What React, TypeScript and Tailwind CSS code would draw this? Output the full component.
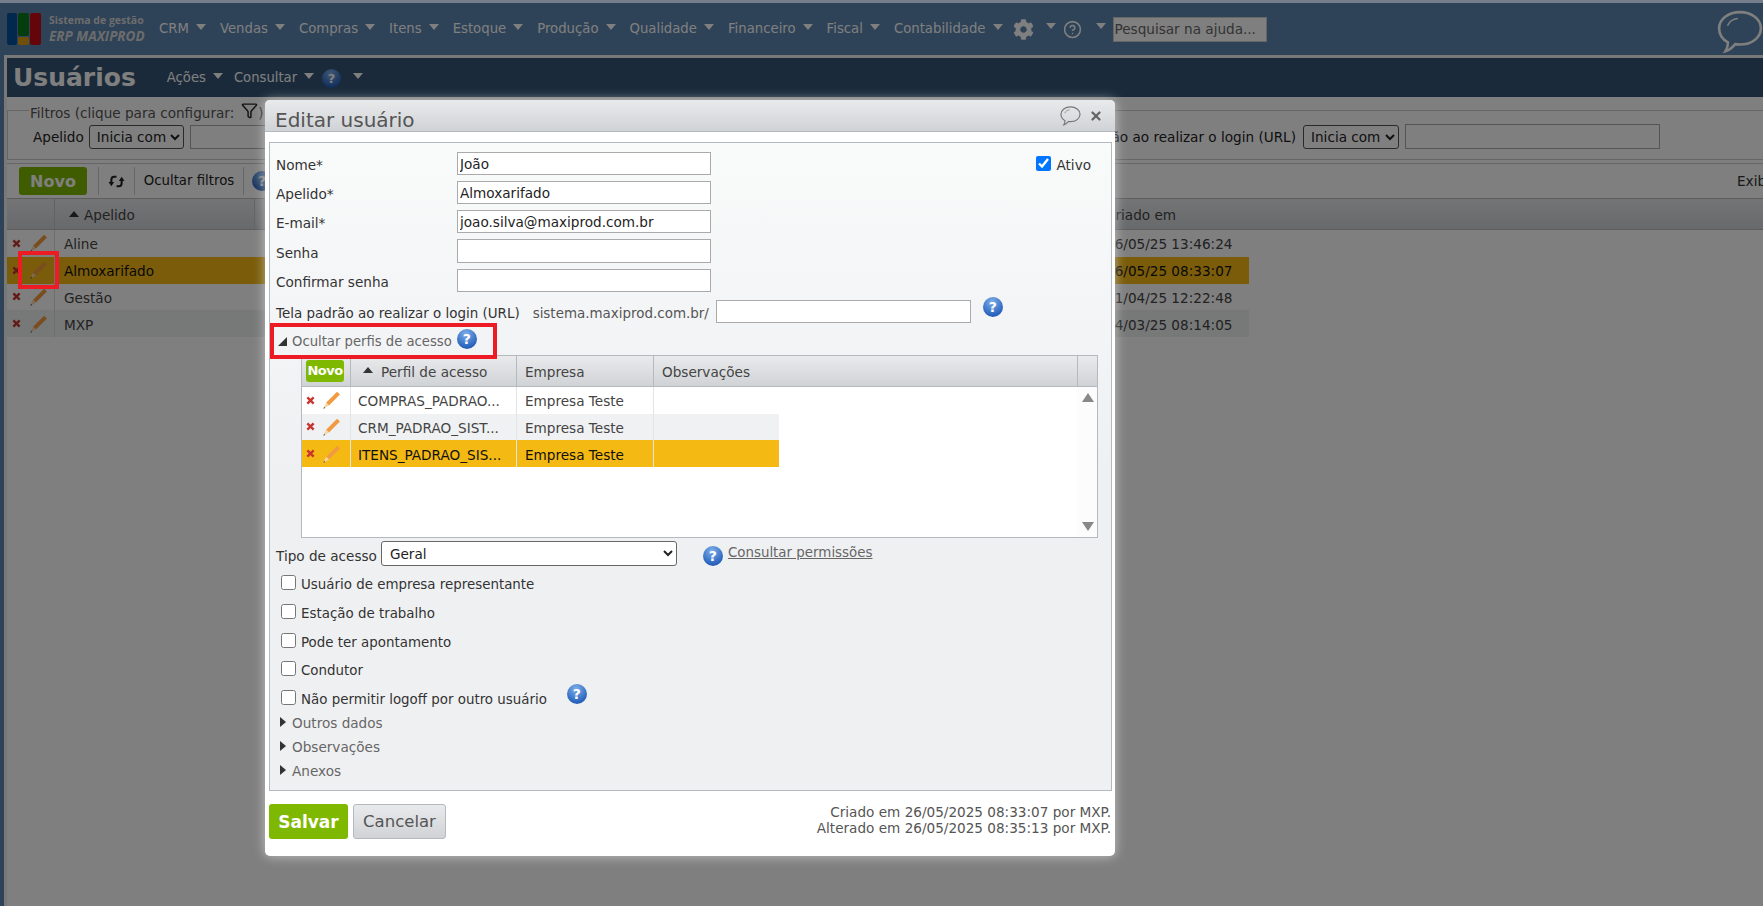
import { CircleHelp, Funnel, X } from 'lucide-react';
import { FaCog } from 'react-icons/fa';

const navItems = ['CRM', 'Vendas', 'Compras', 'Itens', 'Estoque', 'Produção', 'Qualidade', 'Financeiro', 'Fiscal', 'Contabilidade'];

const users = [
  { name: 'Aline', date: '26/05/25 13:46:24', bg: 'bg-white' },
  { name: 'Almoxarifado', date: '26/05/25 08:33:07', bg: 'bg-[#f5b914]' },
  { name: 'Gestão', date: '11/04/25 12:22:48', bg: 'bg-white' },
  { name: 'MXP', date: '24/03/25 08:14:05', bg: 'bg-[#eff1f1]' },
];

const profiles = [
  { name: 'COMPRAS_PADRAO...', bg: 'bg-white', text: 'text-[#444]' },
  { name: 'CRM_PADRAO_SIST...', bg: 'bg-[#f0f1f3]', text: 'text-[#444]' },
  { name: 'ITENS_PADRAO_SIS...', bg: 'bg-[#f5b914]', text: 'text-[#111]' },
];

const formFields = [
  { label: 'Nome*', value: 'João', h: 'h-[23px]' },
  { label: 'Apelido*', value: 'Almoxarifado', h: 'h-[23px]' },
  { label: 'E-mail*', value: 'joao.silva@maxiprod.com.br', h: 'h-[23px]' },
  { label: 'Senha', value: '', h: 'h-[24px]' },
  { label: 'Confirmar senha', value: '', h: 'h-[23px]' },
];

const flags = ['Usuário de empresa representante', 'Estação de trabalho', 'Pode ter apontamento', 'Condutor'];

function Caret({ className = 'fill-white' }: { className?: string }) {
  return (
    <svg viewBox="0 0 10 6" className={`w-[10px] h-[6px] ${className}`}>
      <path d="M0 0h10L5 6z" />
    </svg>
  );
}

function Help({ size = 'w-[20px] h-[20px] text-[14px]' }: { size?: string }) {
  return (
    <span className={`inline-flex items-center justify-center rounded-full shrink-0 font-bold text-white leading-none bg-[radial-gradient(circle_at_45%_25%,#7fb0ea,#2a64bd_70%,#1d4f9f)] ${size}`}>
      ?
    </span>
  );
}

function Pencil() {
  return (
    <svg viewBox="0 0 20 20" className="w-[22px] h-[22px] shrink-0">
      <path d="M5.500 12.500 15.500 2.500l2.600 2.600-10 10z" fill="#f29a3f" />
      <path d="M5.500 12.500 3 18l5.100-2.900z" fill="#f6d6a8" />
      <path d="M3.800 16.200 3 18l1.800-.8z" fill="#555" />
    </svg>
  );
}

function RemoveX() {
  return (
    <svg viewBox="0 0 10 10" className="w-[9px] h-[9px] shrink-0">
      <path d="M1.500 1.500l7 7M8.500 1.500l-7 7" stroke="#c6352f" strokeWidth="2.600" />
    </svg>
  );
}

function Bubble({ className }: { className: string }) {
  return (
    <svg viewBox="0 0 44 42" fill="none" className={className}>
      <path d="M22 2c11 0 20 6.500 20 15.500S33 33 22 33c-1.500 0-3 0-4.500-.4C15 35.500 11.500 38.500 8 39.500c1.500-2.500 2.500-5 2.500-8.500C5 28 2 23 2 17.500 2 8.500 11 2 22 2z" stroke="currentColor" strokeWidth="2.500" />
      <path d="M10 15c1.500-4 5-6.500 10-7" stroke="currentColor" strokeWidth="1.500" />
    </svg>
  );
}

// two curved arrows of the grid's refresh button
function RefreshArrows() {
  return (
    <svg viewBox="0 0 18 16" fill="none" className="w-[17px] h-[15px] text-[#222]">
      <path d="M9 3H6.500C4.500 3 3.500 4.500 3.500 6.500V10" stroke="currentColor" strokeWidth="2.200" />
      <path d="M0.500 8.500h6L3.500 13z" fill="currentColor" />
      <path d="M9 13h2.500c2 0 3-1.500 3-3.500V6" stroke="currentColor" strokeWidth="2.200" />
      <path d="M11.500 7.500h6L14.500 3z" fill="currentColor" />
    </svg>
  );
}

function Collapsed({ label }: { label: string }) {
  return (
    <div className="flex items-center h-[24px] pl-[4px] text-[#666]">
      <svg viewBox="0 0 6 10" className="w-[6px] h-[10px] fill-[#333] mr-[6px] -mt-[2px]">
        <path d="M0 0v10l6-5z" />
      </svg>
      <span>{label}</span>
    </div>
  );
}

export default function App() {
  return (
    <div className="relative w-[1763px] h-[906px] overflow-hidden flex flex-col bg-[#5c84b0] border-t-[3px] border-[#757e8a] text-[13.600px] leading-[18px] font-['DejaVu_Sans',Verdana,sans-serif]">
      {/* Main menu */}
      <div className="h-[52px] flex items-center shrink-0 text-white relative">
        <div className="flex items-center ml-[7px] w-[145px]">
          <div className="flex gap-[1px] h-[32px] w-[36px] shrink-0">
            <div className="w-[10px] rounded-[2px] bg-[#05519b]" />
            <div className="w-[11px] flex flex-col gap-[1px]">
              <div className="flex-1 rounded-[2px] bg-[#0b7a1c]" />
              <div className="h-[8px] rounded-[2px] bg-[#e0a010]" />
            </div>
            <div className="w-[11px] rounded-[2px] bg-[#c90a14]" />
          </div>
          <div className="ml-[6px] font-['Open_Sans',sans-serif] font-bold leading-none text-[#d8d8d8]">
            <div className="text-[10.500px] whitespace-nowrap">Sistema de gestão</div>
            <div className="text-[13.500px] italic mt-[4px] whitespace-nowrap">ERP MAXIPROD</div>
          </div>
        </div>
        <div className="flex items-center ml-[7px] gap-[14px] text-[13.250px]">
          {navItems.map((item) => (
            <div key={item} className="flex items-center gap-[7px] whitespace-nowrap">
              {item}
              <span className="-mt-[4px]"><Caret /></span>
            </div>
          ))}
        </div>
        <FaCog className="w-[21px] h-[21px] ml-[10px] text-white" />
        <span className="-mt-[6px] ml-[12px]"><Caret /></span>
        <CircleHelp className="w-[19px] h-[19px] ml-[7px] text-white" strokeWidth={2} />
        <span className="-mt-[6px] ml-[14px]"><Caret /></span>
        <div className="ml-[7px] w-[154px] h-[25px] bg-white border border-[#ccc] text-[#666] pl-[1px] flex items-center whitespace-nowrap">
          Pesquisar na ajuda...
        </div>
        <Bubble className="absolute left-[1717px] top-[7px] w-[46px] h-[44px] text-white" />
      </div>

      {/* Page */}
      <div className="flex-1 ml-[4px] border-l-[3px] border-t-[3px] border-[#f0f0f0] bg-white flex flex-col min-h-0">
        <div className="h-[39px] shrink-0 flex items-center bg-[#345474] text-white text-[13.200px]">
          <span className="ml-[6px] text-[25px] font-bold leading-none">Usuários</span>
          <div className="ml-[31px] flex items-center gap-[7px]">
            Ações <span className="-mt-[4px]"><Caret /></span>
          </div>
          <div className="ml-[11px] flex items-center gap-[7px]">
            Consultar <span className="-mt-[4px]"><Caret /></span>
          </div>
          <span className="ml-[8px] mt-[2px]"><Help size="w-[19px] h-[19px] text-[13px]" /></span>
          <span className="ml-[12px] -mt-[4px]"><Caret /></span>
        </div>

        {/* Filters */}
        <fieldset className="mt-[4px] h-[59px] -mr-[20px] border border-[#ccc] shrink-0 text-[#222]">
          <legend className="ml-[21px] px-[1px] h-[18px] pt-[5px] flex items-center text-[#555]">
            Filtros (clique para configurar:
            <Funnel className="w-[17px] h-[17px] ml-[7px] -mt-[5px] text-[#222]" />)
          </legend>
          <div className="flex items-center mt-[5px] pl-[25px] pr-[122px]">
            <span className="mt-[1px]">Apelido</span>
            <select className="ml-[5px] w-[95px] h-[24px] bg-white border border-[#555] rounded-[3px] pl-[3px]">
              <option>Inicia com</option>
            </select>
            <input readOnly className="ml-[6px] w-[190px] h-[24px] bg-white border border-[#aaa]" />
            <span className="ml-auto mt-[1px]">Tela padrão ao realizar o login (URL)</span>
            <select className="ml-[7px] w-[96px] h-[24px] bg-white border border-[#555] rounded-[3px] pl-[3px]">
              <option>Inicia com</option>
            </select>
            <input readOnly className="ml-[6px] w-[255px] h-[25px] bg-white border border-[#aaa]" />
          </div>
        </fieldset>

        {/* Toolbar */}
        <div className="mt-[3px] h-[35px] shrink-0 border-t border-[#ccc] flex items-center text-[#222]">
          <button className="ml-[12px] w-[68px] h-[28px] pt-[2px] bg-[#7fb800] rounded-[3px] text-white font-bold text-[16px]">Novo</button>
          <div className="ml-[11px] h-[28px] w-[37px] border-x border-[#ccc] flex items-center justify-center">
            <RefreshArrows />
          </div>
          <div className="h-[28px] w-[109px] border-r border-[#ccc] flex items-center justify-center whitespace-nowrap text-[13.300px]">Ocultar filtros</div>
          <span className="ml-[8px]"><Help /></span>
          <span className="ml-auto mr-[-20px] w-[46px] whitespace-nowrap overflow-hidden text-[#333]">Exibir</span>
        </div>

        {/* Users grid */}
        <div className="h-[32px] shrink-0 flex items-center border-y border-[#bbb] bg-gradient-to-b from-[#e8e9eb] to-[#d0d3d6] text-[#444]">
          <div className="w-[48px] h-full border-r border-[#c0c4c8]" />
          <div className="w-[200px] h-full border-r border-[#c0c4c8] flex items-center pl-[14px] gap-[5px]">
            <svg viewBox="0 0 10 6" className="w-[10px] h-[6px] fill-[#333]"><path d="M5 0l5 6H0z" /></svg>
            <span className="mt-[2px]">Apelido</span>
          </div>
          <div className="ml-[851px] mt-[2px]">Criado em</div>
        </div>
        {users.map((u) => (
          <div key={u.name} className={`h-[26.750px] w-[1242px] shrink-0 flex items-center ${u.bg} ${u.name === 'Almoxarifado' ? 'text-[#111]' : 'text-[#444]'}`}>
            <div className="w-[48px] h-full border-r border-[#ddd] flex items-center pl-[5px] gap-[6px]">
              <RemoveX />
              <Pencil />
            </div>
            <div className="w-[200px] pl-[9px] mt-[2px]">{u.name}</div>
            <div className="ml-[851px] mt-[2px] whitespace-nowrap">{u.date}</div>
          </div>
        ))}
      </div>

      {/* Modal backdrop */}
      <div className="absolute inset-0 -top-[3px] bg-black/50" />

      {/* Edit user dialog */}
      <div className="absolute left-[265px] top-[97px] w-[850px] h-[756px] rounded-[5px] bg-white flex flex-col shadow-[0_0_12px_rgba(255,255,255,0.55)] text-[#333]">
        <div className="h-[32px] shrink-0 rounded-t-[5px] flex items-center bg-gradient-to-b from-[#e9eaec] to-[#d0d3d6] border-b border-[#b4b9bf]">
          <span className="ml-[10px] mt-[8px] text-[20px] leading-none text-[#555]">Editar usuário</span>
          <Bubble className="ml-auto w-[21px] h-[20px] text-[#777]" />
          <X className="ml-[8px] mr-[12px] w-[14px] h-[14px] text-[#666]" strokeWidth={4} />
        </div>

        <div className="mt-[10px] ml-[4px] mr-[3px] h-[649px] shrink-0 border border-[#b4b9bf] bg-gradient-to-b from-[#f9fafa] to-[#eff0f2] to-50% pt-[9px] pl-[6px]">
          <div className="flex justify-between">
            <div className="flex flex-col gap-[6px]">
              {formFields.map((f) => (
                <div key={f.label} className="flex items-center">
                  <span className="w-[181px] mt-[3px]">{f.label}</span>
                  <input readOnly value={f.value} className={`w-[254px] ${f.h} bg-white border border-[#aaa] px-[2px] text-[#222]`} />
                </div>
              ))}
            </div>
            <label className="flex items-center h-[19px] mt-[2px] mr-[20px] gap-[5px]">
              <input type="checkbox" readOnly checked className="w-[15px] h-[15px]" />
              <span className="mt-[2px]">Ativo</span>
            </label>
          </div>

          <div className="flex items-center mt-[8px] h-[23px] text-[13.450px]">
            <span className="mt-[5px]">Tela padrão ao realizar o login (URL)</span>
            <span className="ml-[13px] mt-[5px] text-[#555]">sistema.maxiprod.com.br/</span>
            <input readOnly className="ml-[7px] w-[255px] h-[23px] bg-white border border-[#aaa]" />
            <span className="ml-[12px] -mt-[10px]"><Help /></span>
          </div>

          <div className="flex items-center mt-[9px] h-[18px] pl-[2px] text-[#666] text-[13.200px]">
            <svg viewBox="0 0 10 10" className="w-[9px] h-[9px] fill-[#333] mr-[5px]"><path d="M10 0v10H0z" /></svg>
            <span className="mt-[2px]">Ocultar perfis de acesso</span>
            <span className="ml-[5px] -mt-[4px]"><Help /></span>
          </div>

          {/* Access profiles */}
          <div className="relative mt-[5px] ml-[25px] w-[797px] h-[183px] border border-[#b4b9bf] bg-white text-[#444]">
            <div className="h-[31px] flex items-center bg-gradient-to-b from-[#e9eaec] to-[#d0d3d6] border-b border-[#b4b9bf]">
              <div className="w-[49px] h-full border-r border-[#b4b9bf] flex items-center pl-[4px]">
                <button className="w-[38px] h-[22px] bg-[#7fb800] rounded-[3px] text-white font-bold text-[13px] tracking-[-0.5px]">Novo</button>
              </div>
              <div className="w-[166px] h-full border-r border-[#b4b9bf] flex items-center pl-[12px] gap-[8px]">
                <svg viewBox="0 0 10 6" className="w-[10px] h-[6px] fill-[#333] -mt-[3px]"><path d="M5 0l5 6H0z" /></svg>
                <span className="mt-[2px]">Perfil de acesso</span>
              </div>
              <div className="w-[137px] h-full border-r border-[#b4b9bf] flex items-center pl-[8px] pt-[2px]">Empresa</div>
              <div className="w-[424px] h-full border-r border-[#b4b9bf] flex items-center pl-[8px] pt-[2px]">Observações</div>
            </div>
            {profiles.map((p) => (
              <div key={p.name} className={`h-[26.670px] w-[477px] flex items-center ${p.bg} ${p.text}`}>
                <div className="w-[49px] h-full border-r border-[#e3e4e6] flex items-center pl-[4px] gap-[5px]">
                  <RemoveX />
                  <Pencil />
                </div>
                <div className="w-[166px] h-full border-r border-[#e3e4e6] flex items-center pl-[7px] pt-[2px] whitespace-nowrap">{p.name}</div>
                <div className="w-[137px] h-full border-r border-[#e3e4e6] flex items-center pl-[8px] pt-[2px]">Empresa Teste</div>
              </div>
            ))}
            <div className="absolute right-0 top-[31px] bottom-0 w-[19px] bg-[#fcfcfc] flex flex-col items-center justify-between py-[6px]">
              <svg viewBox="0 0 12 9" className="w-[12px] h-[9px] fill-[#888]"><path d="M6 0l6 9H0z" /></svg>
              <svg viewBox="0 0 12 9" className="w-[12px] h-[9px] fill-[#888]"><path d="M0 0h12L6 9z" /></svg>
            </div>
          </div>

          <div className="flex items-center mt-[3px] h-[25px]">
            <span className="mt-[5px]">Tipo de acesso</span>
            <select className="ml-[4px] w-[296px] h-[25px] bg-white border border-[#666] rounded-[3px] pl-[4px] text-[#222]">
              <option>Geral</option>
            </select>
            <span className="ml-[26px] mt-[4px]"><Help /></span>
            <a className="ml-[5px] -mt-[2px] text-[#666] underline whitespace-nowrap text-[13.400px]">Consultar permissões</a>
          </div>

          <div className="flex flex-col gap-[13.750px] mt-[9px] pl-[5px] text-[13.400px]">
            {flags.map((f) => (
              <label key={f} className="flex items-center h-[15px] gap-[5px]">
                <input type="checkbox" readOnly className="w-[15px] h-[15px]" />
                <span className="mt-[5px]">{f}</span>
              </label>
            ))}
            <label className="flex items-center h-[15px] gap-[5px]">
              <input type="checkbox" readOnly className="w-[15px] h-[15px]" />
              <span className="mt-[5px]">Não permitir logoff por outro usuário</span>
              <span className="ml-[15px] -mt-[8px]"><Help /></span>
            </label>
          </div>

          <div className="mt-[6px]">
            <Collapsed label="Outros dados" />
            <Collapsed label="Observações" />
            <Collapsed label="Anexos" />
          </div>
        </div>

        <div className="flex-1 flex items-start pt-[13px] pl-[4px] pr-[4px]">
          <button className="w-[79px] h-[35px] pt-[1px] bg-[#7fb800] rounded-[3px] text-white font-bold text-[17px]">Salvar</button>
          <button className="ml-[5px] w-[93px] h-[35px] pt-[1px] bg-gradient-to-b from-[#e9eaec] to-[#d0d3d6] border border-[#b4b9bf] rounded-[3px] text-[#555] text-[16.500px]">Cancelar</button>
          <div className="ml-auto text-right leading-[16px] text-[#555]">
            <div>Criado em 26/05/2025 08:33:07 por MXP.</div>
            <div>Alterado em 26/05/2025 08:35:13 por MXP.</div>
          </div>
        </div>
      </div>

      {/* Red annotation boxes */}
      <div className="absolute left-[18px] top-[248px] w-[41px] h-[38px] border-[4px] border-[#ed1c24]" />
      <div className="absolute left-[270px] top-[320px] w-[227px] h-[36px] border-[4px] border-[#ed1c24]" />
    </div>
  );
}
